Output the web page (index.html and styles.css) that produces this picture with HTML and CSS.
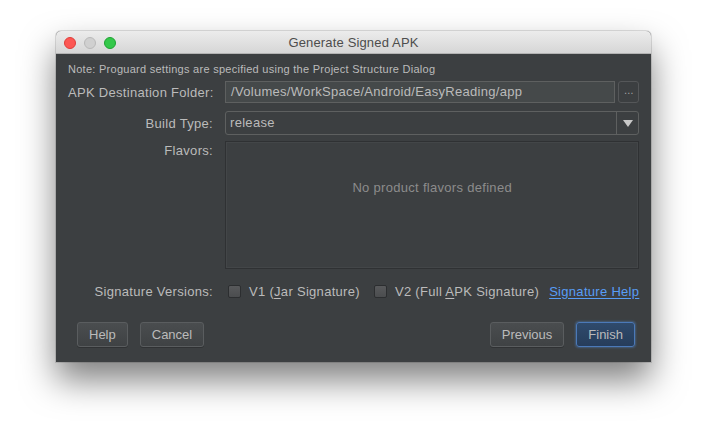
FILE: index.html
```html
<!DOCTYPE html>
<html>
<head>
<meta charset="utf-8">
<link rel="stylesheet" href="styles.css">
</head>
<body>
<div class="stage">
  <div class="window">
    <div class="titlebar">
      <div class="lights">
        <span class="light red"></span>
        <span class="light gray"></span>
        <span class="light green"></span>
      </div>
      <div class="title">Generate Signed APK</div>
    </div>
    <div class="content">
      <div class="note">Note: Proguard settings are specified using the Project Structure Dialog</div>
      <div class="form">
        <div class="label">APK Destination Folder:</div>
        <div class="field-row">
          <div class="input">/Volumes/WorkSpace/Android/EasyReading/app</div>
          <div class="browse">…</div>
        </div>
        <div class="label label-build">Build Type:</div>
        <div class="combo">
          <div class="combo-text">release</div>
          <div class="combo-arrow"><span class="tri"></span></div>
        </div>
        <div class="label label-top">Flavors:</div>
        <div class="flavors">No product flavors defined</div>
        <div class="label label-sig">Signature Versions:</div>
        <div class="sig-row">
          <label class="check"><span class="box"></span><span>V1 (<u>J</u>ar Signature)</span></label>
          <label class="check"><span class="box"></span><span>V2 (Full <u>A</u>PK Signature)</span></label>
          <a class="link" href="#">Signature Help</a>
        </div>
      </div>
      <div class="buttons">
        <div class="btn-group">
          <div class="btn">Help</div>
          <div class="btn">Cancel</div>
        </div>
        <div class="btn-group">
          <div class="btn">Previous</div>
          <div class="btn primary">Finish</div>
        </div>
      </div>
    </div>
  </div>
</div>
</body>
</html>
```

FILE: styles.css
```css
html, body {
  margin: 0;
  padding: 0;
  background: #ffffff;
  width: 707px;
  height: 443px;
  overflow: hidden;
}
body {
  font-family: "Liberation Sans", Arial, sans-serif;
  color: #bbbbbb;
}
.stage {
  padding: 31px 0 0 56px;
}
.window {
  width: 595px;
  height: 331px;
  border-radius: 5px 5px 0 0;
  background: #3c3f41;
  box-shadow: 0 18px 34px rgba(0, 0, 0, 0.5), 0 0 0 1px rgba(0, 0, 0, 0.12);
  display: flex;
  flex-direction: column;
}
.titlebar {
  height: 23px;
  flex: none;
  border-radius: 5px 5px 0 0;
  background: linear-gradient(#ececec, #d6d6d6);
  border-bottom: 1px solid #b3b3b3;
  box-sizing: border-box;
  display: flex;
  align-items: center;
  position: relative;
}
.lights {
  display: flex;
  gap: 8px;
  padding-left: 8px;
  padding-top: 1px;
}
.light {
  width: 12px;
  height: 12px;
  border-radius: 50%;
  box-sizing: border-box;
}
.red { background: #fc5753; border: 1px solid #df3d39; }
.gray { background: #d0d0d0; border: 1px solid #b9b9b9; }
.green { background: #34c84a; border: 1px solid #1ea332; }
.title {
  position: absolute;
  left: 0;
  right: 0;
  top: 0;
  line-height: 23px;
  text-align: center;
  font-size: 13px;
  letter-spacing: 0.15px;
  color: #4d4d4d;
}
.content {
  flex: 1;
  padding: 0 13px 0 12px;
  display: flex;
  flex-direction: column;
  letter-spacing: 0.3px;
}
.note {
  font-size: 11px;
  line-height: 14px;
  margin-top: 8px;
  letter-spacing: 0.27px;
  color: #bbbbbb;
}
.form {
  margin-top: 5px;
  display: grid;
  grid-template-columns: 145px 1fr;
  column-gap: 12px;
  font-size: 13px;
}
.label {
  text-align: right;
  align-self: center;
  white-space: nowrap;
}
.label-build { margin-top: 8px; }
.label-top {
  align-self: start;
  margin-top: 8px;
}
.label-sig { margin-top: 13px; }
.field-row {
  display: flex;
  gap: 3px;
  height: 22px;
}
.input {
  flex: 1;
  background: #45494a;
  border: 1px solid #5e6060;
  box-sizing: border-box;
  padding: 0 5px;
  line-height: 20px;
  font-size: 13px;
  color: #bbbbbb;
}
.browse {
  width: 21px;
  box-sizing: border-box;
  border: 1px solid #555759;
  border-radius: 3px;
  background: #3c3f41;
  font-size: 10px;
  letter-spacing: 0;
  text-align: center;
  line-height: 18px;
  color: #aaaaaa;
}
.combo {
  margin-top: 8px;
  height: 24px;
  box-sizing: border-box;
  border: 1px solid #5e6060;
  border-radius: 3px;
  display: flex;
}
.combo-text {
  flex: 1;
  padding: 0 4px;
  line-height: 22px;
  font-size: 13px;
}
.combo-arrow {
  width: 21px;
  border-left: 1px solid #5e6060;
  display: flex;
  align-items: center;
  justify-content: center;
}
.tri {
  width: 0;
  height: 0;
  border-left: 5px solid transparent;
  border-right: 5px solid transparent;
  border-top: 7px solid #c8c8c8;
}
.flavors {
  margin-top: 6px;
  height: 128px;
  box-sizing: border-box;
  border: 1px solid #2f3133;
  background: #3c3f41;
  box-shadow: inset 0 0 0 1px #434648;
  display: flex;
  justify-content: center;
  padding-top: 38px;
  font-size: 13px;
  color: #8c8c8c;
}
.sig-row {
  margin-top: 13px;
  display: flex;
  align-items: center;
  height: 18px;
}
.check {
  display: flex;
  align-items: center;
  margin-left: 3px;
  margin-right: 14px;
  white-space: nowrap;
}
.check + .check { margin-right: 10px; margin-left: 0; }
.check u { text-decoration-thickness: 1px; text-underline-offset: 2px; }
.box {
  width: 13px;
  height: 13px;
  box-sizing: border-box;
  border: 1px solid #2c2e30;
  border-radius: 2px;
  background: linear-gradient(#58595b, #4b4d4f);
  margin-right: 8px;
}
.link {
  color: #589df6;
  text-decoration: underline;
  text-underline-offset: 2px;
  white-space: nowrap;
}
.buttons {
  margin-top: 22px;
  padding-left: 9px;
  padding-right: 3px;
  display: flex;
  justify-content: space-between;
}
.btn-group {
  display: flex;
  gap: 12px;
}
.btn {
  height: 25px;
  box-sizing: border-box;
  padding: 0 11px;
  border: 1px solid #5a5d5f;
  border-radius: 3px;
  background: linear-gradient(#4a4d4f, #3f4244);
  font-size: 13px;
  letter-spacing: 0;
  line-height: 23px;
  color: #bbbbbb;
  box-shadow: 0 1px 0 rgba(0,0,0,0.2);
}
.btn.primary {
  padding: 0 11px;
  border: 1px solid #4b79b8;
  background: linear-gradient(#2f4a6c, #263d5b);
  box-shadow: 0 0 2px 1px rgba(76, 126, 190, 0.45);
}
```
